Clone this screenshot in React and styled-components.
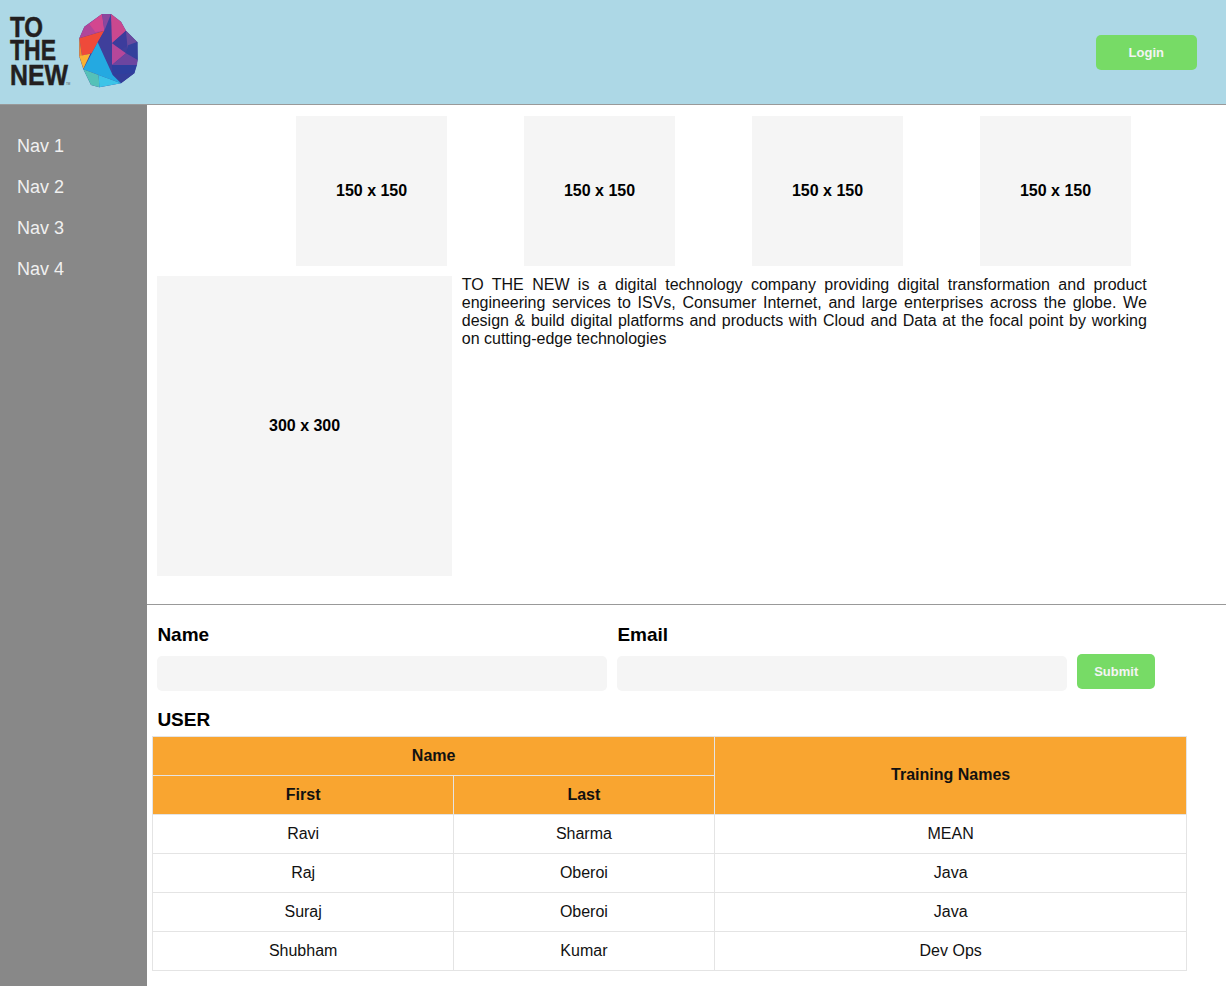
import React from 'react';
import styled, { createGlobalStyle } from 'styled-components';

const GlobalStyle = createGlobalStyle`
  html, body {
    margin: 0;
    padding: 0;
    background: #fff;
    font-family: "Liberation Sans", Arial, sans-serif;
    color: #000;
  }
  * { box-sizing: border-box; }
`;

const Page = styled.div`
  width: 1226px;
  height: 986px;
  overflow: hidden;
  display: flex;
  flex-direction: column;
`;

const Header = styled.header`
  flex: none;
  height: 105px;
  background: #add8e6;
  border-bottom: 1px solid #999;
  display: flex;
  align-items: flex-start;
  justify-content: space-between;
`;

const LogoArt = styled.svg`
  display: block;
  width: 142px;
  height: 90px;
`;

const LogoWord = styled.text`
  font-family: "Liberation Sans", Arial, sans-serif;
  font-weight: bold;
  font-size: 29px;
  fill: #231f20;
  stroke: #231f20;
  stroke-width: 0.5px;
`;

const LogoMark = styled.text`
  font-family: "Liberation Sans", Arial, sans-serif;
  font-size: 3px;
  fill: #555;
`;

const GreenButton = styled.button`
  border: 0;
  border-radius: 5px;
  background: #77db66;
  color: #f4f4f4;
  font: bold 13px "Liberation Sans", Arial, sans-serif;
  width: ${p => p.$width}px;
  height: 35px;
  padding: 0;
`;

const LoginButton = styled(GreenButton)`
  margin: 35px 29.4px 0 0;
`;

const Body = styled.div`
  flex: 1;
  display: flex;
  min-height: 0;
`;

const Sidebar = styled.nav`
  flex: none;
  width: 147.4px;
  background: #888;
  padding-top: 20px;
`;

const NavItem = styled.a`
  display: block;
  height: 41px;
  padding: 11px 0 0 17px;
  font-size: 18px;
  line-height: 20px;
  color: #f0f0f0;
`;

const Main = styled.main`
  flex: 1;
  min-width: 0;
`;

const Placeholder = styled.div`
  flex: none;
  background: #f5f5f5;
  display: flex;
  align-items: center;
  justify-content: center;
  font-size: 16px;
  font-weight: bold;
  width: ${p => p.$width}px;
  height: ${p => p.$height}px;
`;

const ThumbRow = styled.div`
  display: flex;
  gap: 77.6px;
  padding: 11px 0 0 149px;
`;

const Intro = styled.section`
  display: flex;
  gap: 10px;
  padding: 10px 0 28px 10px;
  border-bottom: 1px solid #999;
`;

const IntroText = styled.p`
  margin: 0;
  width: 685px;
  font-size: 16px;
  line-height: 18px;
  text-align: justify;
  color: #111;
`;

const UserForm = styled.form`
  display: flex;
  align-items: flex-start;
  gap: 10px;
  padding: 19px 0 0 10px;
`;

const Field = styled.div`
  width: 450px;
`;

const FieldLabel = styled.label`
  display: block;
  height: 32px;
  font-size: 19px;
  font-weight: bold;
  line-height: 22px;
`;

const TextInput = styled.input`
  display: block;
  width: 100%;
  height: 35px;
  border: 0;
  border-radius: 5px;
  background: #f5f5f5;
`;

const SubmitButton = styled(GreenButton)`
  margin-top: 30px;
`;

const SectionTitle = styled.h2`
  margin: 0;
  padding: 18px 0 0 10px;
  height: 45px;
  font-size: 19px;
  line-height: 22px;
  font-weight: bold;
`;

const UserTable = styled.table`
  margin-left: 5px;
  width: 1034px;
  table-layout: fixed;
  border-collapse: collapse;
  font-size: 16px;
`;

const HeadCell = styled.th`
  height: 39px;
  padding: 0 0 ${p => (p.$raised ? 2 : 0)}px;
  background: #f9a530;
  border: 1px solid #e4e4e4;
  text-align: center;
  font-weight: bold;
  color: #111;
`;

const DataCell = styled.td`
  height: 39px;
  padding: 0;
  border: 1px solid #e4e4e4;
  text-align: center;
  color: #111;
`;

const users = [
  ['Ravi', 'Sharma', 'MEAN'],
  ['Raj', 'Oberoi', 'Java'],
  ['Suraj', 'Oberoi', 'Java'],
  ['Shubham', 'Kumar', 'Dev Ops'],
];

const navs = ['Nav 1', 'Nav 2', 'Nav 3', 'Nav 4'];

const gemOutline = '78,12 105,12 135,35 150,62 183,95 185,150 175,190 135,220 70,232 45,225 22,178 10,140 10,85 25,50';

const gemFacets = [
  ['10,85 25,50 78,12 85,62', '#b0469a'],
  ['78,12 40,42 58,66 85,62', '#d3478f'],
  ['78,12 105,12 110,30 85,62', '#8a479e'],
  ['10,85 85,62 47,130 18,137', '#ef4a3a'],
  ['10,85 18,137 10,140', '#f58a2b'],
  ['10,138 43,131 22,176', '#f9b233'],
  ['105,12 85,62 65,97 110,195 110,90', '#3f3f9b'],
  ['105,12 135,35 150,62 108,100', '#c9488f'],
  ['108,100 150,62 156,106 135,120', '#3c3c9c'],
  ['150,62 183,95 156,130', '#6a4a9e'],
  ['108,100 150,130 108,165', '#b5479a'],
  ['156,106 185,95 185,150 150,130', '#33409c'],
  ['108,165 150,130 185,150 183,165', '#6c45a0'],
  ['108,165 183,165 175,190 110,195', '#2e3f9e'],
  ['110,195 175,190 135,220', '#333e9a'],
  ['65,97 110,195 135,220 68,195 22,178', '#24a9e1'],
  ['22,178 68,195 70,232 45,225', '#55c1b8'],
  ['68,195 135,220 70,232', '#3cc4e8'],
];

const Logo = () => (
  <LogoArt viewBox="0 0 142 90">
    <LogoWord x="10" y="37" textLength="33" lengthAdjust="spacingAndGlyphs">TO</LogoWord>
    <LogoWord x="10" y="60" textLength="46" lengthAdjust="spacingAndGlyphs">THE</LogoWord>
    <LogoWord x="10" y="84.5" textLength="58" lengthAdjust="spacingAndGlyphs">NEW</LogoWord>
    <LogoMark x="66" y="85">TM</LogoMark>
    <g transform="translate(76 10) scale(0.3333)">
      <polygon points={gemOutline} fill="#3f3f9b" />
      {gemFacets.map(([points, fill]) => <polygon key={points} points={points} fill={fill} />)}
    </g>
  </LogoArt>
);

const App = () => (
  <Page>
    <GlobalStyle />
    <Header>
      <Logo />
      <LoginButton $width={100.6}>Login</LoginButton>
    </Header>
    <Body>
      <Sidebar>
        {navs.map(n => <NavItem key={n}>{n}</NavItem>)}
      </Sidebar>
      <Main>
        <ThumbRow>
          {[0, 1, 2, 3].map(i => (
            <Placeholder key={i} $width={150.4} $height={150}>150 x 150</Placeholder>
          ))}
        </ThumbRow>
        <Intro>
          <Placeholder $width={294.4} $height={300}>300 x 300</Placeholder>
          <IntroText>
            TO THE NEW is a digital technology company providing digital transformation and product
            engineering services to ISVs, Consumer Internet, and large enterprises across the globe. We
            design &amp; build digital platforms and products with Cloud and Data at the focal point by working
            on cutting-edge technologies
          </IntroText>
        </Intro>
        <UserForm>
          <Field>
            <FieldLabel>Name</FieldLabel>
            <TextInput />
          </Field>
          <Field>
            <FieldLabel>Email</FieldLabel>
            <TextInput />
          </Field>
          <SubmitButton $width={77.6}>Submit</SubmitButton>
        </UserForm>
        <SectionTitle>USER</SectionTitle>
        <UserTable>
          <colgroup>
            <col style={{ width: 300.5 }} />
            <col style={{ width: 261 }} />
            <col style={{ width: 472.5 }} />
          </colgroup>
          <thead>
            <tr>
              <HeadCell colSpan={2}>Name</HeadCell>
              <HeadCell rowSpan={2} $raised>Training Names</HeadCell>
            </tr>
            <tr>
              <HeadCell>First</HeadCell>
              <HeadCell>Last</HeadCell>
            </tr>
          </thead>
          <tbody>
            {users.map(u => (
              <tr key={u[0]}>
                {u.map((v, i) => <DataCell key={i}>{v}</DataCell>)}
              </tr>
            ))}
          </tbody>
        </UserTable>
      </Main>
    </Body>
  </Page>
);

export default App;
